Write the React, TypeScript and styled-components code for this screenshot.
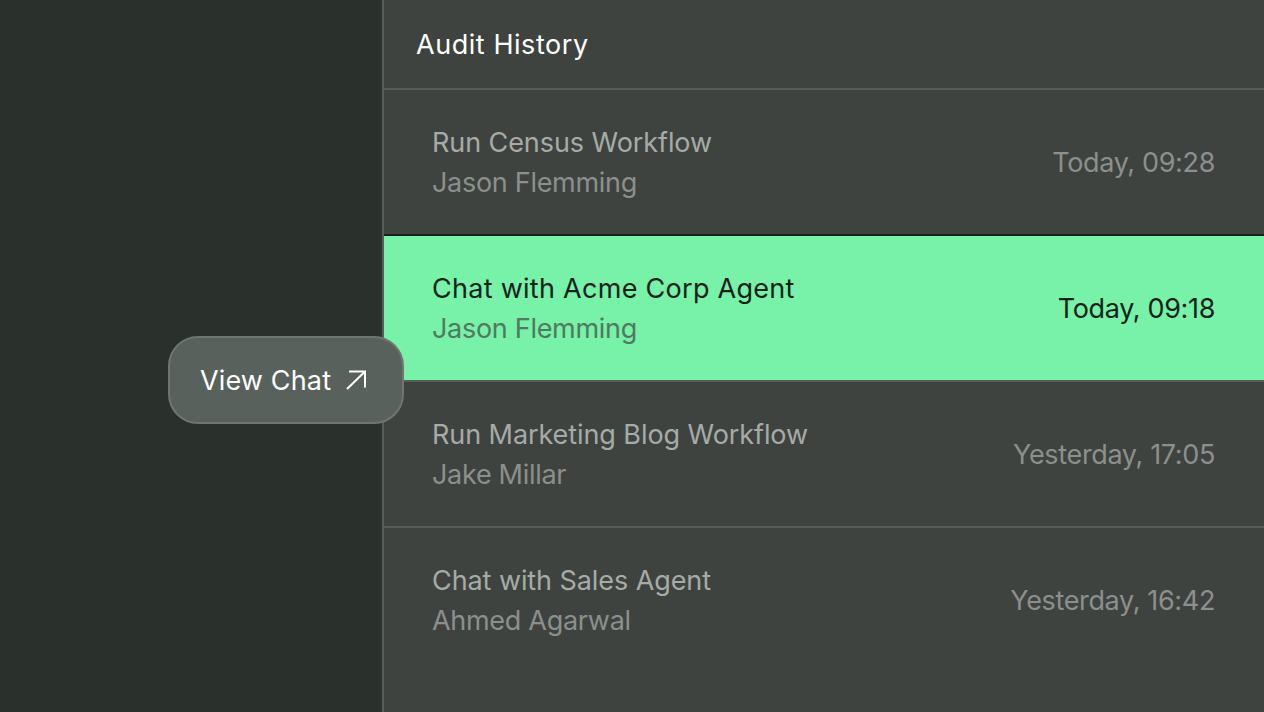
import styled, { createGlobalStyle } from "styled-components";

const GlobalStyle = createGlobalStyle`
  html, body {
    margin: 0;
    height: 100%;
    overflow: hidden;
    background: #2a302c;
    font-family: "Inter", "Liberation Sans", sans-serif;
  }
`;

type Entry = {
  title: string;
  author: string;
  time: string;
  active?: boolean;
};

const entries: Entry[] = [
  { title: "Run Census Workflow", author: "Jason Flemming", time: "Today, 09:28" },
  { title: "Chat with Acme Corp Agent", author: "Jason Flemming", time: "Today, 09:18", active: true },
  { title: "Run Marketing Blog Workflow", author: "Jake Millar", time: "Yesterday, 17:05" },
  { title: "Chat with Sales Agent", author: "Ahmed Agarwal", time: "Yesterday, 16:42" },
];

const App = () => {
  return (
    <Page>
      <GlobalStyle />
      <LeftPane />
      <Panel>
        <Header>Audit History</Header>
        {entries.map((entry) => (
          <Row key={entry.title + entry.time} $active={entry.active}>
            <RowText>
              <Title $active={entry.active}>{entry.title}</Title>
              <Author $active={entry.active}>{entry.author}</Author>
            </RowText>
            <Time $active={entry.active}>{entry.time}</Time>
          </Row>
        ))}
      </Panel>
      <ViewChat>
        View Chat
        <svg width="24" height="24" viewBox="0 0 24 24" fill="none" stroke="#fff" strokeWidth="2">
          <path d="M3 21 L21 3.5" />
          <path d="M5 3.5 H21 V19.5" />
        </svg>
      </ViewChat>
    </Page>
  );
};

const Page = styled.div`
  position: relative;
  display: flex;
  width: 1264px;
  height: 712px;
  overflow: hidden;
`;

const LeftPane = styled.div`
  width: 382px;
  flex-shrink: 0;
  background: #2a302c;
`;

const Panel = styled.div`
  flex: 1;
  background: #3e4340;
  border-left: 2px solid #565c57;
`;

const Header = styled.div`
  height: 88px;
  display: flex;
  align-items: center;
  padding-left: 32px;
  border-bottom: 2px solid #565c57;
  color: #fff;
  font-size: 27px;
  letter-spacing: 0.55px;
`;

const Row = styled.div<{ $active?: boolean }>`
  box-sizing: border-box;
  height: 146px;
  display: flex;
  align-items: center;
  justify-content: space-between;
  padding: 0 49px 0 48px;
  background: ${(p) => (p.$active ? "#78f1a9" : "transparent")};
  border-bottom: 2px solid #565c57;
  ${(p) => p.$active && "box-shadow: 0 -2px 0 #14201e;"}

  &:last-child {
    border-bottom-color: transparent;
  }
`;

const RowText = styled.div`
  display: flex;
  flex-direction: column;
  gap: 4px;
  padding-top: 2px;
`;

const Title = styled.div<{ $active?: boolean }>`
  font-size: 27px;
  line-height: 36px;
  letter-spacing: ${(p) => (p.$active ? "0.28px" : "-0.08px")};
  color: ${(p) => (p.$active ? "#10231a" : "#a6aba7")};
`;

const Author = styled.div<{ $active?: boolean }>`
  font-size: 27px;
  line-height: 36px;
  letter-spacing: -0.3px;
  color: ${(p) => (p.$active ? "#4f7a60" : "#8b908c")};
`;

const Time = styled.div<{ $active?: boolean }>`
  font-size: 27px;
  letter-spacing: -0.35px;
  color: ${(p) => (p.$active ? "#10231a" : "#8b908c")};
`;

const ViewChat = styled.div`
  position: absolute;
  left: 168px;
  top: 336px;
  box-sizing: border-box;
  width: 236px;
  height: 88px;
  display: flex;
  align-items: center;
  gap: 13px;
  padding-left: 30px;
  background: #59615c;
  border: 2px solid #6f7670;
  border-radius: 30px;
  color: #fff;
  font-size: 27px;
  letter-spacing: 0.15px;
`;

export default App;
